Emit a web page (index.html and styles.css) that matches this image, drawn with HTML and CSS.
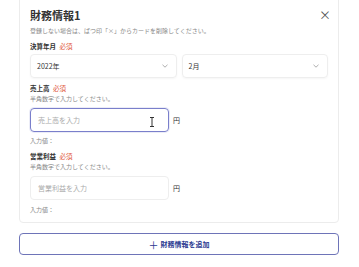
FILE: index.html
```html
<!DOCTYPE html>
<html lang="ja">
<head>
    <meta charset="UTF-8">
    <meta name="viewport" content="width=device-width, initial-scale=1.0">
    <title>財務情報</title>
    <link rel="stylesheet" href="styles.css">
</head>
<body>
    <div class="page">
        <div class="fin-card">
            <div class="fin-header">
                <h2 class="fin-title">財務情報1</h2>
                <span class="fin-close">×</span>
            </div>
            <p class="fin-note">登録しない場合は、ばつ印「×」からカードを削除してください。</p>

            <div class="field-label">決算年月 <span class="req">必須</span></div>
            <div class="select-row">
                <div class="select-box">
                    <span>2022年</span>
                    <svg class="chev" width="6" height="4" viewBox="0 0 6 4"><path d="M0.5 0.8 L3 3.2 L5.5 0.8" fill="none" stroke="#999" stroke-width="0.8"/></svg>
                </div>
                <div class="select-box">
                    <span>2月</span>
                    <svg class="chev" width="6" height="4" viewBox="0 0 6 4"><path d="M0.5 0.8 L3 3.2 L5.5 0.8" fill="none" stroke="#999" stroke-width="0.8"/></svg>
                </div>
            </div>

            <div class="field-label gap-top">売上高 <span class="req">必須</span></div>
            <div class="field-hint">半角数字で入力してください。</div>
            <div class="input-row">
                <div class="input-box focused">
                    <span class="placeholder">売上高を入力</span>
                    <svg class="ibeam" width="6" height="10" viewBox="0 0 6 10"><path d="M1 0.5 H5 M3 0.5 V9.5 M1 9.5 H5" fill="none" stroke="#333" stroke-width="1"/></svg>
                </div>
                <span class="unit">円</span>
            </div>
            <div class="field-value">入力値：</div>

            <div class="field-label gap-top">営業利益 <span class="req">必須</span></div>
            <div class="field-hint">半角数字で入力してください。</div>
            <div class="input-row">
                <div class="input-box">
                    <span class="placeholder">営業利益を入力</span>
                </div>
                <span class="unit">円</span>
            </div>
            <div class="field-value">入力値：</div>
        </div>

        <button class="add-btn"><span class="plus">＋</span> 財務情報を追加</button>
    </div>
</body>
</html>
```

FILE: styles.css
```css
* {
    margin: 0;
    padding: 0;
    box-sizing: border-box;
}

body {
    font-family: "Noto Sans CJK JP", "Noto Sans", sans-serif;
    background: #fff;
    color: #333;
}

.page {
    padding: 0 20px 0 19px;
}

.fin-card {
    margin-top: -4px;
    border: 1px solid #ececec;
    border-radius: 4px;
    padding: 11px 10px 7px 10px;
    background: #fff;
}

.fin-header {
    display: flex;
    justify-content: space-between;
    align-items: center;
    height: 14px;
}

.fin-title {
    font-size: 11px;
    line-height: 14px;
    font-weight: 700;
    color: #333;
}

.fin-close {
    font-size: 12px;
    line-height: 14px;
    color: #555;
    margin-right: -3px;
}

.fin-note {
    margin-top: 4px;
    font-size: 6px;
    line-height: 10px;
    color: #888;
    white-space: nowrap;
}

.field-label {
    margin-top: 5px;
    font-size: 6.5px;
    line-height: 10px;
    font-weight: 700;
    color: #333;
}

.field-label.gap-top {
    margin-top: 5px;
}

.req {
    color: #e0563a;
    font-weight: 400;
    margin-left: 2px;
}

.select-row {
    margin-top: 3px;
    display: grid;
    grid-template-columns: 1fr 1fr;
    gap: 5px;
}

.select-box {
    height: 24px;
    border: 1px solid #eeeeee;
    border-radius: 4px;
    box-shadow: 0 1px 2px rgba(0, 0, 0, 0.04);
    display: flex;
    align-items: center;
    justify-content: space-between;
    padding: 0 8px 0 6px;
    font-size: 7px;
    color: #333;
}

.field-hint {
    margin-top: 1px;
    font-size: 6px;
    line-height: 10px;
    color: #888;
}

.input-row {
    margin-top: 4px;
    display: flex;
    align-items: center;
    gap: 4px;
}

.input-box {
    position: relative;
    width: 139px;
    height: 24px;
    border: 1px solid #eeeeee;
    border-radius: 4px;
    display: flex;
    align-items: center;
    padding-left: 7px;
}

.input-box.focused {
    border-color: #7a7fcb;
    box-shadow: 0 0 0 1px rgba(122, 127, 203, 0.15);
}

.placeholder {
    font-size: 7px;
    color: #aaa;
}

.ibeam {
    position: absolute;
    left: 118px;
    top: 8px;
}

.unit {
    font-size: 7px;
    color: #333;
}

.field-value {
    margin-top: 4px;
    font-size: 6px;
    line-height: 10px;
    color: #888;
}

.field-value:last-child {
    margin-top: 5px;
}

.add-btn {
    display: flex;
    align-items: center;
    justify-content: center;
    gap: 2px;
    width: 100%;
    height: 22px;
    margin-top: 10px;
    background: #fff;
    border: 1px solid #6e74b8;
    border-radius: 4px;
    font-family: inherit;
    font-size: 7px;
    font-weight: 700;
    color: #2b3990;
}

.plus {
    font-size: 10px;
    font-weight: 400;
    color: #2b3990;
}
```
